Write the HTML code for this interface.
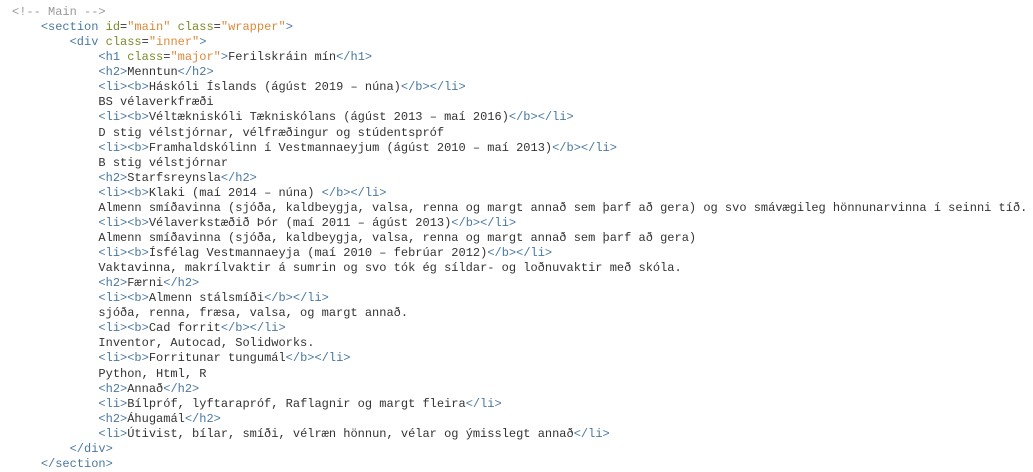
<!DOCTYPE html>
<html><head><meta charset="utf-8"><style>
html,body{margin:0;padding:0;background:#fff;width:1033px;height:470px;overflow:hidden}
pre{margin:0;position:absolute;left:12px;top:5px;font-family:"Liberation Mono",monospace;font-size:12px;line-height:15.07px;color:#333}
.c{color:#999}.t{color:#4a78a0}.a{color:#7c8a2a}.v{color:#e0883a}
</style></head><body><pre><span class="c">&lt;!-- Main --&gt;</span>
    <span class="t">&lt;section</span> <span class="a">id</span>=<span class="v">"main"</span> <span class="a">class</span>=<span class="v">"wrapper"</span><span class="t">&gt;</span>
        <span class="t">&lt;div</span> <span class="a">class</span>=<span class="v">"inner"</span><span class="t">&gt;</span>
            <span class="t">&lt;h1</span> <span class="a">class</span>=<span class="v">"major"</span><span class="t">&gt;</span>Ferilskráin mín<span class="t">&lt;/h1&gt;</span>
            <span class="t">&lt;h2&gt;</span>Menntun<span class="t">&lt;/h2&gt;</span>
            <span class="t">&lt;li&gt;&lt;b&gt;</span>Háskóli Íslands (ágúst 2019 – núna)<span class="t">&lt;/b&gt;&lt;/li&gt;</span>
            BS vélaverkfræði
            <span class="t">&lt;li&gt;&lt;b&gt;</span>Véltækniskóli Tækniskólans (ágúst 2013 – maí 2016)<span class="t">&lt;/b&gt;&lt;/li&gt;</span>
            D stig vélstjórnar, vélfræðingur og stúdentspróf
            <span class="t">&lt;li&gt;&lt;b&gt;</span>Framhaldskólinn í Vestmannaeyjum (ágúst 2010 – maí 2013)<span class="t">&lt;/b&gt;&lt;/li&gt;</span>
            B stig vélstjórnar
            <span class="t">&lt;h2&gt;</span>Starfsreynsla<span class="t">&lt;/h2&gt;</span>
            <span class="t">&lt;li&gt;&lt;b&gt;</span>Klaki (maí 2014 – núna) <span class="t">&lt;/b&gt;&lt;/li&gt;</span>
            Almenn smíðavinna (sjóða, kaldbeygja, valsa, renna og margt annað sem þarf að gera) og svo smávægileg hönnunarvinna í seinni tíð.
            <span class="t">&lt;li&gt;&lt;b&gt;</span>Vélaverkstæðið Þór (maí 2011 – ágúst 2013)<span class="t">&lt;/b&gt;&lt;/li&gt;</span>
            Almenn smíðavinna (sjóða, kaldbeygja, valsa, renna og margt annað sem þarf að gera)
            <span class="t">&lt;li&gt;&lt;b&gt;</span>Ísfélag Vestmannaeyja (maí 2010 – febrúar 2012)<span class="t">&lt;/b&gt;&lt;/li&gt;</span>
            Vaktavinna, makrílvaktir á sumrin og svo tók ég síldar- og loðnuvaktir með skóla.
            <span class="t">&lt;h2&gt;</span>Færni<span class="t">&lt;/h2&gt;</span>
            <span class="t">&lt;li&gt;&lt;b&gt;</span>Almenn stálsmíði<span class="t">&lt;/b&gt;&lt;/li&gt;</span>
            sjóða, renna, fræsa, valsa, og margt annað.
            <span class="t">&lt;li&gt;&lt;b&gt;</span>Cad forrit<span class="t">&lt;/b&gt;&lt;/li&gt;</span>
            Inventor, Autocad, Solidworks.
            <span class="t">&lt;li&gt;&lt;b&gt;</span>Forritunar tungumál<span class="t">&lt;/b&gt;&lt;/li&gt;</span>
            Python, Html, R
            <span class="t">&lt;h2&gt;</span>Annað<span class="t">&lt;/h2&gt;</span>
            <span class="t">&lt;li&gt;</span>Bílpróf, lyftarapróf, Raflagnir og margt fleira<span class="t">&lt;/li&gt;</span>
            <span class="t">&lt;h2&gt;</span>Áhugamál<span class="t">&lt;/h2&gt;</span>
            <span class="t">&lt;li&gt;</span>Útivist, bílar, smíði, vélræn hönnun, vélar og ýmisslegt annað<span class="t">&lt;/li&gt;</span>
        <span class="t">&lt;/div&gt;</span>
    <span class="t">&lt;/section&gt;</span></pre></body></html>
